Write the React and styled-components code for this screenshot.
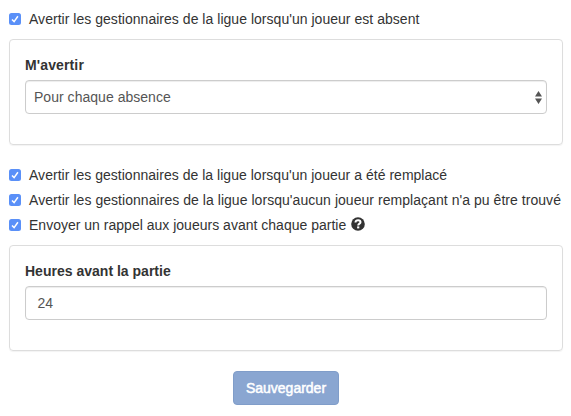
import React from "react";
import styled, { createGlobalStyle } from "styled-components";

const GlobalStyle = createGlobalStyle`
  *, *::before, *::after { box-sizing: border-box; }
  body {
    margin: 0;
    background: #fff;
    color: #333;
    font-family: "Liberation Sans", Arial, sans-serif;
    font-size: 14px;
    line-height: 20px;
  }
`;

const Form = styled.form`
  display: flex;
  flex-direction: column;
  width: 554px;
  margin: 9px 0 0 9px;
`;

const CheckList = styled.div`
  display: flex;
  flex-direction: column;
  gap: 5px;
`;

const CheckLabel = styled.label`
  display: flex;
  align-items: center;
  height: 20px;
  white-space: nowrap;
`;

const CheckInput = styled.input`
  appearance: none;
  position: absolute;
  width: 0;
  height: 0;
  margin: 0;
`;

const CheckMark = styled.svg`
  flex: none;
  width: 12px;
  height: 12px;
  margin-right: 8px;
`;

const CheckText = styled.span`
  letter-spacing: ${({ $tracking }) => $tracking || 0}px;
`;

const HelpIcon = styled.svg`
  flex: none;
  width: 14px;
  height: 14px;
  margin: -2px 0 0 5px;
`;

const Panel = styled.section`
  height: 106px;
  margin: 10px 0 20px;
  padding: 15px;
  border: 1px solid #ddd;
  border-radius: 4px;
  box-shadow: 0 1px 1px rgba(0, 0, 0, 0.05);
`;

const FieldLabel = styled.label`
  display: block;
  margin-bottom: 5px;
  font-weight: 700;
  letter-spacing: ${({ $tracking }) => $tracking || 0}px;
`;

const Field = styled.div`
  display: flex;
  align-items: center;
  justify-content: space-between;
  height: 34px;
  padding: ${({ $inset }) => $inset};
  border: 1px solid #ccc;
  border-radius: 4px;
  box-shadow: inset 0 1px 1px rgba(0, 0, 0, 0.075);
  color: #555;
  letter-spacing: ${({ $tracking }) => $tracking || 0}px;
`;

const Arrows = styled.svg`
  width: 7px;
  height: 13px;
`;

const SaveButton = styled.button`
  align-self: center;
  width: 106px;
  height: 34px;
  padding: 0;
  border: 1px solid #809dc9;
  border-radius: 4px;
  background: #8aa6d1;
  color: #fff;
  font: inherit;
  -webkit-text-stroke: 0.5px #fff;
`;

function CheckRow({ children, tracking, help }) {
  return (
    <CheckLabel>
      <CheckInput type="checkbox" defaultChecked />
      <CheckMark viewBox="0 0 12 12" aria-hidden="true">
        <rect width="12" height="12" rx="2.5" fill="#5a90f8" />
        <path d="M3 6.5 5.1 8.6 8.9 3.3" fill="none" stroke="#fff" strokeWidth="1.5" />
      </CheckMark>
      <CheckText $tracking={tracking}>{children}</CheckText>
      {help && (
        <HelpIcon viewBox="0 0 14 14" aria-hidden="true">
          <circle cx="7" cy="7" r="6.8" fill="#333" />
          <path d="M4.5 5.6C4.5 3.9 5.5 3.3 7.1 3.3S9.5 4 9.5 5.2C9.5 6.7 7.2 6.5 7.2 8.6" fill="none" stroke="#fff" strokeWidth="2" />
          <rect x="6.1" y="9.4" width="2.2" height="2" fill="#fff" />
        </HelpIcon>
      )}
    </CheckLabel>
  );
}

export default function App() {
  return (
    <>
      <GlobalStyle />
      <Form onSubmit={(e) => e.preventDefault()}>
        <CheckList>
          <CheckRow tracking={0.03}>Avertir les gestionnaires de la ligue lorsqu'un joueur est absent</CheckRow>
        </CheckList>
        <Panel>
          <FieldLabel $tracking={0.13}>M'avertir</FieldLabel>
          <Field $inset="0 4px 0 8px" $tracking={0.03}>
            <span>Pour chaque absence</span>
            <Arrows viewBox="0 0 7 13" aria-hidden="true">
              <path d="M0 5.5 3.5 0 7 5.5zM0 7.5h7L3.5 13z" fill="#555" />
            </Arrows>
          </Field>
        </Panel>
        <CheckList>
          <CheckRow tracking={0.025}>Avertir les gestionnaires de la ligue lorsqu'un joueur a été remplacé</CheckRow>
          <CheckRow tracking={0.045}>Avertir les gestionnaires de la ligue lorsqu'aucun joueur remplaçant n'a pu être trouvé</CheckRow>
          <CheckRow tracking={0.01} help>Envoyer un rappel aux joueurs avant chaque partie</CheckRow>
        </CheckList>
        <Panel>
          <FieldLabel $tracking={0.01}>Heures avant la partie</FieldLabel>
          <Field $inset="0 11.5px">
            <span>24</span>
          </Field>
        </Panel>
        <SaveButton type="submit">Sauvegarder</SaveButton>
      </Form>
    </>
  );
}
